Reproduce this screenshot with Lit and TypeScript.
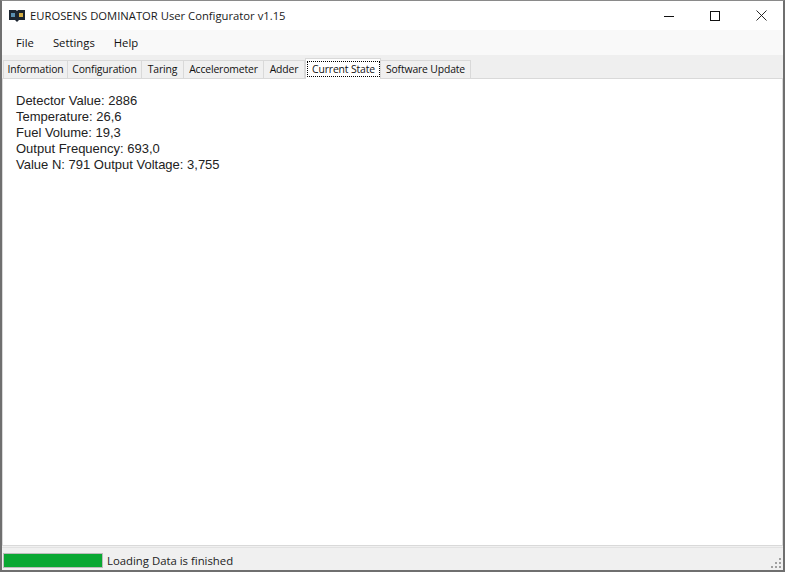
import { LitElement, html, css } from "lit";
import { customElement } from "lit/decorators.js";

const TABS = ["Information", "Configuration", "Taring", "Accelerometer", "Adder", "Current State", "Software Update"];
const WIDTHS = [65, 74, 42, 80, 41, 76, 90];
const LINES = [
  "Detector Value: 2886",
  "Temperature: 26,6",
  "Fuel Volume: 19,3",
  "Output Frequency: 693,0",
  "Value N: 791 Output Voltage: 3,755",
];

@customElement("app-root")
export class AppRoot extends LitElement {
  static styles = css`
    :host {
      display: flex;
      flex-direction: column;
      width: 785px;
      height: 572px;
      box-sizing: border-box;
      border: 2px solid #6f6f6f;
      border-top: 1px solid #8a8a8a;
      background: #f0f0f0;
      font-family: "Open Sans", "Noto Sans", sans-serif;
      color: #111;
      overflow: hidden;
    }
    .title {
      height: 29px;
      flex: none;
      background: #fff;
      display: flex;
      align-items: center;
      padding-left: 7px;
      font-size: 11.25px;
      color: #1a1a1a;
    }
    .title .logo { margin-right: 5px; flex: none; }
    .title .text { flex: 1; white-space: nowrap; }
    .wb {
      width: 46px;
      height: 29px;
      display: flex;
      align-items: center;
      justify-content: center;
    }
    .wbs { display: flex; margin-right: -1px; }
    .menu {
      height: 25px;
      flex: none;
      box-sizing: border-box;
      padding-left: 14px;
      background: #f9f9f9;
      display: flex;
      align-items: center;
      gap: 19px;
      font-size: 11.3px;
    }
    .strip {
      height: 23px;
      flex: none;
      display: flex;
      align-items: flex-end;
      padding-left: 1px;
      background: #efefef;
      position: relative;
      z-index: 1;
    }
    .tab {
      height: 18px;
      box-sizing: border-box;
      border: 1px solid #d9d9d9;
      border-bottom: none;
      border-left: none;
      background: #f0f0f0;
      font-size: 10.4px;
      line-height: 17px;
      text-align: center;
      white-space: nowrap;
      letter-spacing: -0.15px;
    }
    .tab:first-child { border-left: 1px solid #d9d9d9; }
    .tab.active {
      height: 21px;
      margin-bottom: -1px;
      border-left: 1px solid #d9d9d9;
      background: #fff;
      position: relative;
      z-index: 2;
      padding-top: 2px;
    }
    .focus {
      display: block;
      border: 1px dotted #000;
      height: 16px;
      line-height: 14px;
      margin: 0 0 0 1px;
      box-sizing: border-box;
    }
    .page {
      flex: 1;
      background: #fff;
      border: 1px solid #d9d9d9;
      margin: 0 0 1px 0;
      padding: 14px 13px 12px;
      font-family: "Liberation Sans", Arial, sans-serif;
      font-size: 13px;
      line-height: 16px;
      color: #222;
    }
    .page div { white-space: nowrap; }
    .status {
      height: 23px;
      flex: none;
      box-sizing: border-box;
      padding: 3px 0 0 1px;
      display: flex;
      align-items: center;
      font-size: 11.35px;
      background: #f0f0f0;
      border-top: 1px solid #e2e2e2;
    }
    .bar {
      width: 100px;
      height: 15px;
      background: #0aa833;
      border: 1px solid #bcbcbc;
      box-sizing: border-box;
      margin-right: 4px;
    }
    .msg { flex: 1; color: #222; }
    .grip { margin-right: 1px; align-self: flex-end; margin-bottom: 1px; }
  `;

  render() {
    return html`
      <div class="title">
        <svg class="logo" width="16" height="14" viewBox="0 0 16 14">
          <path d="M0 1h7l1 1 1-1h7v10h-6l-2 2-2-2H0z" fill="#1c2530" />
          <rect x="2" y="4" width="4" height="4" fill="#5a8fb0" />
          <rect x="10" y="4" width="4" height="4" fill="#d6b048" />
        </svg>
        <span class="text">EUROSENS DOMINATOR User Configurator v1.15</span>
        <div class="wbs">
          <div class="wb">
            <svg width="10" height="10" viewBox="0 0 10 10"><path d="M0 5.5h10" stroke="#111" fill="none" /></svg>
          </div>
          <div class="wb">
            <svg width="10" height="10" viewBox="0 0 10 10"><rect x=".5" y=".5" width="9" height="9" stroke="#111" fill="none" /></svg>
          </div>
          <div class="wb">
            <svg width="11" height="11" viewBox="0 0 11 11"><path d="M.5.5l10 10M10.5.5l-10 10" stroke="#111" stroke-width=".9" fill="none" /></svg>
          </div>
        </div>
      </div>
      <div class="menu"><span>File</span><span>Settings</span><span>Help</span></div>
      <div class="strip">
        ${TABS.map((t, i) =>
          i === 5
            ? html`<div class="tab active" style="width:${WIDTHS[i]}px"><span class="focus">${t}</span></div>`
            : html`<div class="tab" style="width:${WIDTHS[i]}px">${t}</div>`
        )}
      </div>
      <div class="page">${LINES.map((l) => html`<div>${l}</div>`)}</div>
      <div class="status">
        <div class="bar"></div>
        <span class="msg">Loading Data is finished</span>
        <svg class="grip" width="12" height="12" viewBox="0 0 12 12" fill="#a0a0a0">
          <rect x="9" y="1" width="2" height="2" /><rect x="5" y="5" width="2" height="2" />
          <rect x="9" y="5" width="2" height="2" /><rect x="1" y="9" width="2" height="2" />
          <rect x="5" y="9" width="2" height="2" /><rect x="9" y="9" width="2" height="2" />
        </svg>
      </div>
    `;
  }
}
